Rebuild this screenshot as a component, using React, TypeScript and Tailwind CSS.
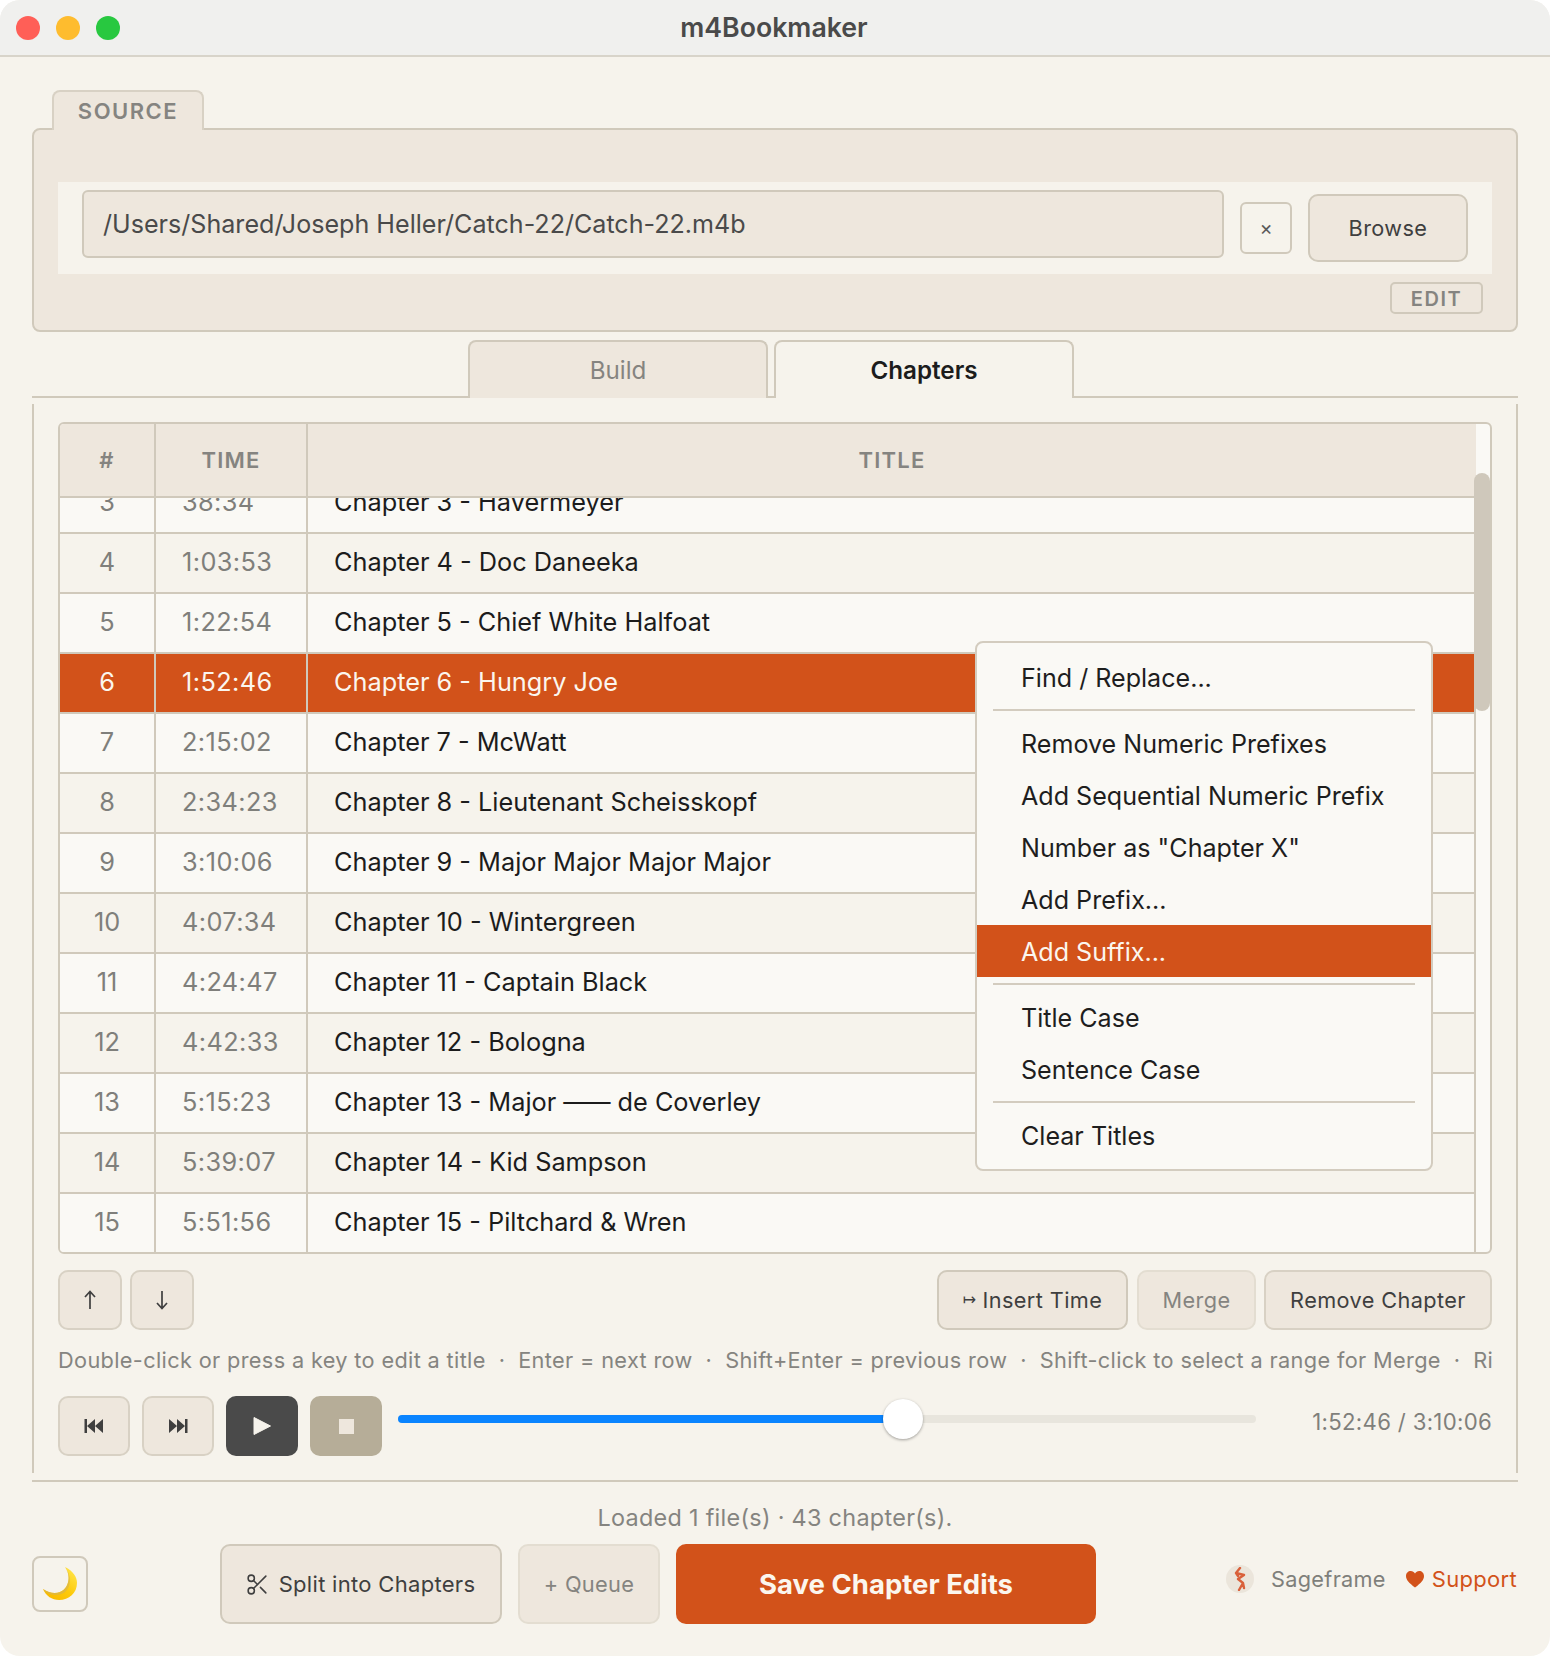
import { Scissors } from "lucide-react";

const rows = [
  { n: 3, time: "38:34", title: "Chapter 3 - Havermeyer" },
  { n: 4, time: "1:03:53", title: "Chapter 4 - Doc Daneeka" },
  { n: 5, time: "1:22:54", title: "Chapter 5 - Chief White Halfoat" },
  { n: 6, time: "1:52:46", title: "Chapter 6 - Hungry Joe" },
  { n: 7, time: "2:15:02", title: "Chapter 7 - McWatt" },
  { n: 8, time: "2:34:23", title: "Chapter 8 - Lieutenant Scheisskopf" },
  { n: 9, time: "3:10:06", title: "Chapter 9 - Major Major Major Major" },
  { n: 10, time: "4:07:34", title: "Chapter 10 - Wintergreen" },
  { n: 11, time: "4:24:47", title: "Chapter 11 - Captain Black" },
  { n: 12, time: "4:42:33", title: "Chapter 12 - Bologna" },
  { n: 13, time: "5:15:23", title: "Chapter 13 - Major —— de Coverley" },
  { n: 14, time: "5:39:07", title: "Chapter 14 - Kid Sampson" },
  { n: 15, time: "5:51:56", title: "Chapter 15 - Piltchard & Wren" },
];

const hint =
  "Double-click or press a key to edit a title  ·  Enter = next row  ·  Shift+Enter = previous row  ·  Shift-click to select a range for Merge  ·  Right-click for more";

function MenuItem({ label, active }: { label: string; active?: boolean }) {
  return (
    <div className={"h-[52px] flex items-center pl-[44px] pt-[3px] " + (active ? "bg-[#d2521a] text-[#fbf6ee]" : "text-[#1e1e1e]")}>
      {label}
    </div>
  );
}

function MenuLine() {
  return (
    <div className="h-[14px] pt-[6px] px-[16px]">
      <div className="h-[2px] bg-[#d3ccbf]" />
    </div>
  );
}

function ContextMenu() {
  return (
    <div className="absolute left-[915px] top-[217px] w-[458px] h-[530px] bg-[#faf9f5] border-2 border-[#d3ccbf] rounded-[8px] pt-[8px] text-[25.1px] overflow-hidden">
      <MenuItem label="Find / Replace..." />
      <MenuLine />
      <MenuItem label="Remove Numeric Prefixes" />
      <MenuItem label="Add Sequential Numeric Prefix" />
      <MenuItem label='Number as "Chapter X"' />
      <MenuItem label="Add Prefix..." />
      <MenuItem label="Add Suffix..." active />
      <MenuLine />
      <MenuItem label="Title Case" />
      <MenuItem label="Sentence Case" />
      <MenuLine />
      <MenuItem label="Clear Titles" />
    </div>
  );
}

function RowTitle({ title }: { title: string }) {
  // the long dash in chapter 13 is narrower in the reference
  const parts = title.split("——");
  if (parts.length === 1) return <>{title}</>;
  return (
    <>
      {parts[0]}
      <span className="tracking-[-3.5px] mr-[3.5px]">——</span>
      {parts[1]}
    </>
  );
}

function ChapterTable() {
  return (
    <div className="relative h-[832px] border-2 border-[#d0c9bb] rounded-[6px] overflow-hidden bg-[#faf9f5]">
      {/* header */}
      <div className="relative z-10 flex h-[74px] mr-[14px] bg-[#eee7dd] border-b-2 border-[#d0c9bb] text-[22px] font-semibold tracking-[1.2px] text-[#858480]">
        <div className="w-[96px] border-r-2 border-[#d0c9bb] flex items-center justify-center">#</div>
        <div className="w-[152px] border-r-2 border-[#d0c9bb] flex items-center justify-center">TIME</div>
        <div className="flex-1 flex items-center justify-center">TITLE</div>
      </div>
      {/* rows, scrolled by a part of a row */}
      <div className="-mt-[24px] mr-[14px] border-r-2 border-[#d0c9bb]">
        {rows.map((row) => {
          const selected = row.n === 6;
          const bg = selected ? "bg-[#d2521a]" : row.n % 2 === 0 ? "bg-[#f6f3ec]" : "bg-[#faf9f5]";
          return (
            <div key={row.n} className={"flex h-[60px] border-b-2 border-[#d0c9bb] text-[25.3px] " + bg}>
              <div className={"w-[96px] border-r-2 border-[#d0c9bb] flex items-center justify-center pb-[2px] " + (selected ? "text-[#fbf6ee]" : "text-[#7f7f7b]")}>
                {row.n}
              </div>
              <div className={"w-[152px] border-r-2 border-[#d0c9bb] flex items-center pl-[26px] pb-[2px] tracking-[0.4px] " + (selected ? "text-[#fbf6ee]" : "text-[#7f7f7b]")}>
                {row.time}
              </div>
              <div className={"flex-1 flex items-center pl-[26px] pb-[2px] whitespace-pre " + (selected ? "text-[#fbf6ee]" : "text-[#1c1c1c]")}>
                <span>
                  <RowTitle title={row.title} />
                </span>
              </div>
            </div>
          );
        })}
      </div>
      {/* scrollbar thumb */}
      <div className="absolute z-20 right-0 top-[49px] w-[16px] h-[238px] rounded-[8px] bg-[#cfc8bb]" />
      <ContextMenu />
    </div>
  );
}

function Transport({ flip }: { flip?: boolean }) {
  return (
    <svg width="20" height="16" viewBox="0 0 20 16" className={flip ? "-scale-x-100" : ""}>
      <path d="M1 1 L9 8 L1 15 Z M9 1 L17 8 L9 15 Z" fill="#3f3f3f" />
      <rect x="17" y="1" width="2.5" height="14" fill="#3f3f3f" />
    </svg>
  );
}

function Moon() {
  return (
    <svg width="34" height="34" viewBox="0 0 34 34">
      <defs>
        <linearGradient id="moonFill" x1="0.9" y1="0.1" x2="0.2" y2="0.9">
          <stop offset="0" stopColor="#ffe347" />
          <stop offset="0.55" stopColor="#fdca0c" />
          <stop offset="1" stopColor="#f9bb00" />
        </linearGradient>
      </defs>
      <path d="M22 0 C30 4 34 10 34 16 C34 26 26 33 16 33 C9 33 3 29 0 22 C6 26 12 27 17 25 C25 22 29 10 22 0 Z" fill="url(#moonFill)" />
      <path d="M22 0 C29 10 25 22 17 25 C12 27 6 26 0 22 C1 23.5 3 25.5 5 26.5 C11 29 18 28 22 25 C28 20 29 9 22 0 Z" fill="#d9b54a" opacity="0.75" />
    </svg>
  );
}

function SageframeLogo() {
  return (
    <div className="w-[28px] h-[28px] rounded-full bg-[#ebe5db] flex items-center justify-center">
      <svg width="18" height="24" viewBox="0 0 18 24" className="blur-[0.6px]">
        <path d="M9 1 L5 6 L13 8 L7 12 L12 16 L8 23 M12 16 L13 21 M5 6 L7 9" stroke="#d9603a" strokeWidth="2.4" fill="none" strokeLinecap="round" strokeLinejoin="round" />
      </svg>
    </div>
  );
}

export default function App() {
  return (
    <div className="w-[1550px] h-[1656px] bg-[#f6f3ec] rounded-[20px] overflow-hidden text-[#3f3f3f] [font-family:Inter,sans-serif]">
      {/* title bar */}
      <div className="relative h-[57px] bg-[#f0f0ee] border-b-2 border-[#d8d4ca] flex items-center justify-center">
        <div className="absolute left-[16px] top-[16px] flex gap-[16px]">
          <div className="w-[24px] h-[24px] rounded-full bg-[#ff5f57]" />
          <div className="w-[24px] h-[24px] rounded-full bg-[#febc2e]" />
          <div className="w-[24px] h-[24px] rounded-full bg-[#28c840]" />
        </div>
        <span className="text-[26.7px] font-semibold text-[#4a4a4a] -ml-[2px]">m4Bookmaker</span>
      </div>

      <div className="px-[32px] pt-[33px]">
        {/* source box */}
        <div className="relative z-10 ml-[20px] -mb-[2px] w-[152px] h-[40px] bg-[#eee7dd] border-2 border-b-0 border-[#d8d1c4] rounded-t-[8px] flex items-center justify-center text-[22px] font-semibold tracking-[1.5px] text-[#858480]">
          SOURCE
        </div>
        <div className="h-[204px] bg-[#eee7dd] border-2 border-[#d0c9bb] rounded-[8px] pt-[52px] px-[24px]">
          <div className="h-[92px] bg-[#f6f3ec] pl-[24px] pr-[24px] flex items-start">
            <div className="flex-1 mt-[8px] h-[68px] bg-[#eee7dd] border-2 border-[#d0c9bb] rounded-[6px] flex items-center pl-[19px] pt-[2px] text-[25.1px] text-[#4a4a4a]">
              /Users/Shared/Joseph Heller/Catch-22/Catch-22.m4b
            </div>
            <div className="ml-[16px] mt-[20px] w-[52px] h-[52px] border-2 border-[#d0c9bb] rounded-[6px] flex items-center justify-center text-[20px] text-[#5a5a5a]">
              ×
            </div>
            <div className="ml-[16px] mt-[12px] w-[160px] h-[68px] bg-[#eee7dd] border-2 border-[#d0c9bb] rounded-[10px] flex items-center justify-center text-[21.7px] tracking-[0.4px]">
              Browse
            </div>
          </div>
          <div className="flex justify-end mt-[8px] mr-[9px]">
            <div className="w-[93px] h-[32px] border-2 border-[#d0c9bb] rounded-[5px] flex items-center justify-center pt-[2px] text-[20px] font-semibold tracking-[1.5px] text-[#858480]">
              EDIT
            </div>
          </div>
        </div>

        {/* tabs */}
        <div className="mt-[8px] h-[58px] border-b-2 border-[#d0c9bb] flex pl-[436px] gap-[6px]">
          <div className="w-[300px] h-[58px] bg-[#eee7dd] border-2 border-b-0 border-[#d0c9bb] rounded-t-[8px] flex items-center justify-center pt-[2px] text-[24.2px] text-[#858480]">
            Build
          </div>
          <div className="w-[300px] h-[58px] bg-[#f6f3ec] border-2 border-b-0 border-[#d0c9bb] rounded-t-[8px] flex items-center justify-center pt-[2px] text-[24.2px] font-semibold text-[#1c1c1c]">
            Chapters
          </div>
        </div>

        {/* chapters panel */}
        <div className="mt-[6px] h-[1069px] border-x-2 border-[#d0c9bb] px-[24px] pt-[18px]">
          <ChapterTable />

          <div className="mt-[16px] flex h-[60px] text-[21.7px] tracking-[0.4px]">
            <div className="w-[64px] bg-[#eee7dd] border-2 border-[#d8d1c4] rounded-[10px] flex items-center justify-center">
              <svg width="14" height="20" viewBox="0 0 14 20" fill="none" stroke="#3f3f3f" strokeWidth="1.7">
                <path d="M7 19 V2 M2 7 L7 1.5 L12 7" />
              </svg>
            </div>
            <div className="ml-[8px] w-[64px] bg-[#eee7dd] border-2 border-[#d8d1c4] rounded-[10px] flex items-center justify-center">
              <svg width="14" height="20" viewBox="0 0 14 20" fill="none" stroke="#3f3f3f" strokeWidth="1.7">
                <path d="M7 1 V18 M2 13 L7 18.5 L12 13" />
              </svg>
            </div>
            <div className="ml-auto w-[191px] bg-[#eee7dd] border-2 border-[#d0c9bb] rounded-[10px] flex items-center justify-center gap-[6px]">
              <span className="text-[16px] [font-family:'DejaVu_Sans',sans-serif]">↦</span>
              Insert Time
            </div>
            <div className="ml-[9px] w-[119px] bg-[#eee7dd] border-2 border-[#e3ddd1] rounded-[10px] flex items-center justify-center text-[#858480]">
              Merge
            </div>
            <div className="ml-[8px] w-[228px] bg-[#eee7dd] border-2 border-[#d8d1c4] rounded-[10px] flex items-center justify-center">
              Remove Chapter
            </div>
          </div>

          <div className="mt-[14px] h-[32px] leading-[32px] overflow-hidden whitespace-pre text-[21.73px] tracking-[0.35px] text-[#858480]">
            {hint}
          </div>

          <div className="mt-[20px] flex h-[60px]">
            <div className="w-[72px] bg-[#eee7dd] border-2 border-[#d8d1c4] rounded-[10px] flex items-center justify-center">
              <Transport flip />
            </div>
            <div className="ml-[12px] w-[72px] bg-[#eee7dd] border-2 border-[#d8d1c4] rounded-[10px] flex items-center justify-center">
              <Transport />
            </div>
            <div className="ml-[12px] w-[72px] bg-[#4a4a4a] rounded-[10px] flex items-center justify-center">
              <svg width="20" height="20" viewBox="0 0 20 20">
                <path d="M2 1.5 L18.5 10 L2 18.5 Z" fill="#f6f3ec" stroke="#f6f3ec" strokeWidth="1" strokeLinejoin="round" />
              </svg>
            </div>
            <div className="ml-[12px] w-[72px] bg-[#b6ad98] rounded-[10px] flex items-center justify-center">
              <div className="w-[15px] h-[15px] bg-[#eee7dd]" />
            </div>
            <div className="relative ml-[16px] mt-[19px] w-[858px] h-[8px] rounded-full bg-[#e8e5dd]">
              <div className="w-[505px] h-[8px] rounded-full bg-[#0a84ff]" />
              <div className="absolute left-[485px] -top-[16px] w-[40px] h-[40px] rounded-full bg-white shadow-[0_1px_3px_rgba(0,0,0,0.35)]" />
            </div>
            <div className="ml-auto mt-[11px] h-[30px] leading-[30px] text-[22.2px] tracking-[0.3px] text-[#7f7f7b]">
              1:52:46 / 3:10:06
            </div>
          </div>
        </div>

        <div className="mt-[7px] border-t-2 border-[#d0c9bb]" />

        <div className="mt-[20px] h-[32px] leading-[32px] text-center text-[23.4px] tracking-[0.3px] text-[#858480]">
          Loaded 1 file(s) · 43 chapter(s).
        </div>

        {/* bottom actions */}
        <div className="mt-[10px] flex items-center h-[80px]">
          <div className="w-[56px] h-[56px] border-2 border-[#d0c9bb] rounded-[8px] flex items-center justify-center">
            <Moon />
          </div>
          <div className="ml-[132px] w-[282px] h-[80px] bg-[#eee7dd] border-2 border-[#d0c9bb] rounded-[10px] flex items-center justify-center gap-[9px] pr-[2px] text-[22px] tracking-[0.3px]">
            <Scissors size={25} strokeWidth={1.5} className="text-[#3f3f3f]" />
            Split into Chapters
          </div>
          <div className="ml-[16px] w-[142px] h-[80px] bg-[#eee7dd] border-2 border-[#e3ddd1] rounded-[10px] flex items-center justify-center text-[21.8px] tracking-[0.3px] text-[#858480]">
            + Queue
          </div>
          <div className="ml-[16px] w-[420px] h-[80px] bg-[#d2521a] rounded-[10px] flex items-center justify-center pt-[2px] text-[27.5px] font-bold text-[#fbf6ee]">
            Save Chapter Edits
          </div>
          <div className="ml-auto -mt-[10px] mr-[1px] flex items-center text-[21.7px] tracking-[0.3px]">
            <SageframeLogo />
            <span className="ml-[17px] text-[#7f7f7b]">Sageframe</span>
            <svg width="18" height="17" viewBox="0 0 18 17" className="ml-[20px]">
              <path d="M9 16.5 C3 12 0 9 0 5 C0 2 2.2 0 4.8 0 C6.6 0 8.1 1 9 2.6 C9.9 1 11.4 0 13.2 0 C15.8 0 18 2 18 5 C18 9 15 12 9 16.5 Z" fill="#d2521a" />
            </svg>
            <span className="ml-[8px] text-[22px] text-[#d2521a]">Support</span>
          </div>
        </div>
      </div>
    </div>
  );
}
